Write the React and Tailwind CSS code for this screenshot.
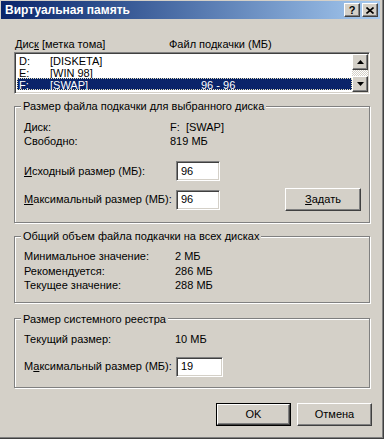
import React from 'react'

const raised = 'border border-t-white border-l-white border-r-[#404040] border-b-[#404040] shadow-[inset_-1px_-1px_0_#808080] bg-[#d4d0c8]'
const sunken = 'border border-t-[#808080] border-l-[#808080] border-r-white border-b-white shadow-[inset_1px_1px_0_#404040,inset_-1px_-1px_0_#d4d0c8] bg-white'

function Field({ value, className = '' }) {
  return (
    <div className={`${sunken} h-[20px] flex items-center pl-[4px] ${className}`}>{value}</div>
  )
}

function Group({ title, className = '', bodyClass = '', children }) {
  return (
    <fieldset className={`border border-[#808080] shadow-[inset_1px_1px_0_#fff,1px_1px_0_#fff] ${className}`}>
      <legend className="ml-[6px] px-[2px] leading-[14px] bg-[#d4d0c8]">{title}</legend>
      <div className={bodyClass}>{children}</div>
    </fieldset>
  )
}

function Arrow({ up }) {
  return (
    <svg width="7" height="4" viewBox="0 0 7 4">
      {up ? <path d="M3.5 0L7 4H0z" fill="#000" /> : <path d="M0 0H7L3.5 4z" fill="#000" />}
    </svg>
  )
}

const rows = [
  { d: 'D:', label: '[DISKETA]', size: '' },
  { d: 'E:', label: '[WIN 98]', size: '' },
  { d: 'F:', label: '[SWAP]', size: '96 - 96', selected: true },
]

export default function App() {
  return (
    <div
      className="w-[384px] h-[439px] bg-[#d4d0c8] text-black text-[11px] pt-[1px] pl-[1px] border-r border-b border-r-[#404040] border-b-[#404040] shadow-[inset_-1px_-1px_0_#808080] overflow-hidden"
      style={{ fontFamily: '"Liberation Sans", Arial, sans-serif' }}
    >
      {/* title bar */}
      <div className="h-[18px] w-[379px] flex items-center justify-between pl-[4px] pr-[2px] bg-gradient-to-r from-[#0a246a] to-[#a6caf0]">
        <span className="text-white font-bold text-[12px]">Виртуальная память</span>
        <div className="flex gap-[2px]">
          <div className={`${raised} w-[16px] h-[14px] flex items-center justify-center font-bold text-[11px] leading-none`}>?</div>
          <div className={`${raised} w-[16px] h-[14px] flex items-center justify-center`}>
            <svg width="8" height="7" viewBox="0 0 8 7">
              <path d="M0.5 0.5L7.5 6.5M7.5 0.5L0.5 6.5" stroke="#000" strokeWidth="1.6" />
            </svg>
          </div>
        </div>
      </div>

      <div className="pl-[13px] w-[370px]">
        {/* header */}
        <div className="flex leading-[14px] mt-[18px]">
          <span className="w-[155px] pl-[1px]">Дис<u>к</u> [метка тома]</span>
          <span>Файл подкачки (МБ)</span>
        </div>

        {/* listbox */}
        <div className={`${sunken} mt-[1px] h-[42px] w-[356px] flex p-[1px] pl-[2px]`}>
          <div className="flex-1 flex flex-col">
            {rows.map((r) => (
              <div
                key={r.d}
                className={`h-[12px] leading-[12px] flex border border-dotted ${r.selected ? 'bg-[#0a246a] text-white border-[#e6e2b8]' : 'border-transparent'}`}
              >
                <span className="w-[32px] pl-[1px]">{r.d}</span>
                <span className="w-[151px]">{r.label}</span>
                <span>{r.size}</span>
              </div>
            ))}
          </div>
          <div className="w-[16px] flex flex-col">
            <div className={`${raised} h-[16px] flex items-center justify-center`}><Arrow up /></div>
            <div className="flex-1 [background-image:repeating-conic-gradient(#d4d0c8_0_25%,#ffffff_0_50%)] [background-size:2px_2px]" />
            <div className={`${raised} h-[16px] flex items-center justify-center`}><Arrow /></div>
          </div>
        </div>

        {/* selected disk */}
        <Group title="Размер файла подкачки для выбранного диска" className="mt-[5px] w-[356px]" bodyClass="pl-[9px] pr-[8px] pt-[7px] pb-[11px]">
          <div className="leading-[14px]">
            <div className="flex"><span className="w-[146px]">Диск:</span><span>F:&nbsp; [SWAP]</span></div>
            <div className="flex"><span className="w-[146px]">Свободно:</span><span>819 МБ</span></div>
          </div>
          <div className="flex items-center mt-[13px]">
            <span className="w-[152px]"><u>И</u>сходный размер (МБ):</span>
            <Field value="96" className="w-[44px]" />
          </div>
          <div className="flex items-center mt-[7px] h-[23px]">
            <span className="w-[152px]"><u>М</u>аксимальный размер (МБ):</span>
            <Field value="96" className="w-[44px]" />
            <div className={`${raised} ml-auto w-[76px] h-[23px] flex items-center justify-center`}><span><u>З</u>адать</span></div>
          </div>
        </Group>

        {/* total */}
        <Group title="Общий объем файла подкачки на всех дисках" className="mt-[6px] w-[356px]" bodyClass="pl-[9px] pt-[6px] pb-[9px]">
          <div className="leading-[14.5px]">
            <div className="flex"><span className="w-[151px]">Минимальное значение:</span><span>2 МБ</span></div>
            <div className="flex"><span className="w-[151px]">Рекомендуется:</span><span>286 МБ</span></div>
            <div className="flex"><span className="w-[151px]">Текущее значение:</span><span>288 МБ</span></div>
          </div>
        </Group>

        {/* registry */}
        <Group title="Размер системного реестра" className="mt-[9px] w-[356px]" bodyClass="pl-[9px] pt-[6px] pb-[10px]">
          <div className="flex leading-[14px]"><span className="w-[151px]">Текущий размер:</span><span>10 МБ</span></div>
          <div className="flex items-center mt-[11px]">
            <span className="w-[152px]">М<u>а</u>ксимальный размер (МБ):</span>
            <Field value="19" className="w-[47px]" />
          </div>
        </Group>

        {/* buttons */}
        <div className="flex justify-end gap-[6px] mt-[15px] w-[358px]">
          <div className="border border-black">
            <div className={`${raised} w-[73px] h-[21px] flex items-center justify-center`}>OK</div>
          </div>
          <div className={`${raised} w-[75px] h-[23px] flex items-center justify-center`}>Отмена</div>
        </div>
      </div>
    </div>
  )
}
